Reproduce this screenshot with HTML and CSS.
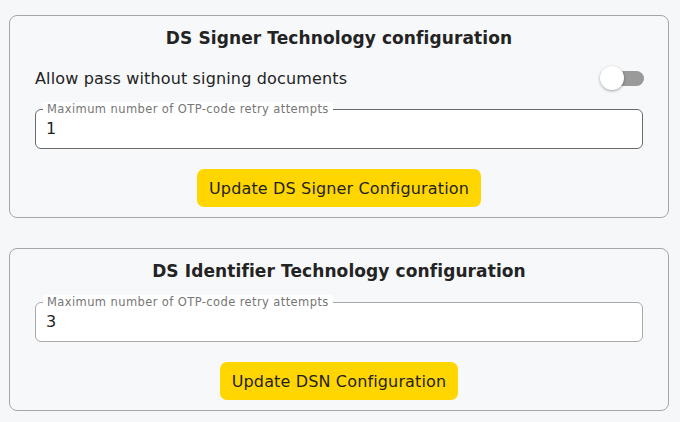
FILE: index.html
```html
<!DOCTYPE html>
<html lang="en">
<head>
<meta charset="utf-8">
<title>DS Configuration</title>
<link rel="stylesheet" href="styles.css">
</head>
<body>
<main class="page">
  <section class="card">
    <h2 class="card-title">DS Signer Technology configuration</h2>
    <div class="switch-row">
      <span class="switch-label">Allow pass without signing documents</span>
      <span class="switch"><span class="switch-track"></span><span class="switch-thumb"></span></span>
    </div>
    <fieldset class="field field-active">
      <legend class="field-legend">Maximum number of OTP-code retry attempts</legend>
      <div class="field-value">1</div>
    </fieldset>
    <div class="actions">
      <button class="btn" type="button">Update DS Signer Configuration</button>
    </div>
  </section>
  <section class="card">
    <h2 class="card-title">DS Identifier Technology configuration</h2>
    <fieldset class="field">
      <legend class="field-legend">Maximum number of OTP-code retry attempts</legend>
      <div class="field-value">3</div>
    </fieldset>
    <div class="actions">
      <button class="btn" type="button">Update DSN Configuration</button>
    </div>
  </section>
</main>
</body>
</html>
```
FILE: styles.css
```css
* { box-sizing: border-box; }
html, body {
  margin: 0;
  padding: 0;
  background: #f6f7f9;
}
body {
  font-family: "DejaVu Sans", "Liberation Sans", sans-serif;
  color: #232323;
}
.page {
  padding: 15px 11px 0 9px;
  display: flex;
  flex-direction: column;
  gap: 30px;
}
.card {
  border: 1px solid #a6a6a6;
  border-radius: 8px;
  background: #f7f8fa;
  padding: 10px 25px 10px 25px;
  display: flex;
  flex-direction: column;
}
.card-title {
  margin: 0;
  font-size: 17px;
  line-height: 24px;
  font-weight: bold;
  text-align: center;
  letter-spacing: 0.1px;
}
.switch-row {
  margin-top: 16px;
  height: 24px;
  display: flex;
  align-items: center;
  justify-content: space-between;
}
.switch-label {
  font-size: 16px;
  letter-spacing: 0.15px;
}
.switch {
  position: relative;
  width: 44px;
  height: 24px;
  margin-right: -1px;
}
.switch-track {
  position: absolute;
  left: 3px;
  right: 0;
  top: 5px;
  height: 15px;
  border-radius: 8px;
  background: #9a9a9a;
}
.switch-thumb {
  position: absolute;
  left: 0;
  top: 0;
  width: 24px;
  height: 24px;
  border-radius: 50%;
  background: #ffffff;
  box-shadow: 0 1px 3px rgba(0,0,0,0.35);
}
.field {
  margin: 12px 0 0 0;
  padding: 0 11px 7px 7px;
  border: 1px solid #a9a9a9;
  border-radius: 6px;
  background: #ffffff;
  min-width: 0;
}
.field-active {
  border-color: #6a6a6a;
}
.field-legend {
  padding: 0 4px;
  font-size: 11.5px;
  line-height: 14px;
  color: #767676;
  background: #ffffff;
  border-radius: 3px;
  letter-spacing: 0.4px;
}
.field-value {
  padding-left: 3px;
  font-size: 16px;
  line-height: 25px;
  color: #1f1f1f;
}
.actions {
  margin-top: 20px;
  display: flex;
  justify-content: center;
}
.btn {
  font-family: inherit;
  font-size: 16px;
  letter-spacing: 0.15px;
  color: #1f1f1f;
  background: #ffd600;
  border: none;
  border-radius: 7px;
  height: 38px;
  padding: 0 12px;
}
```
